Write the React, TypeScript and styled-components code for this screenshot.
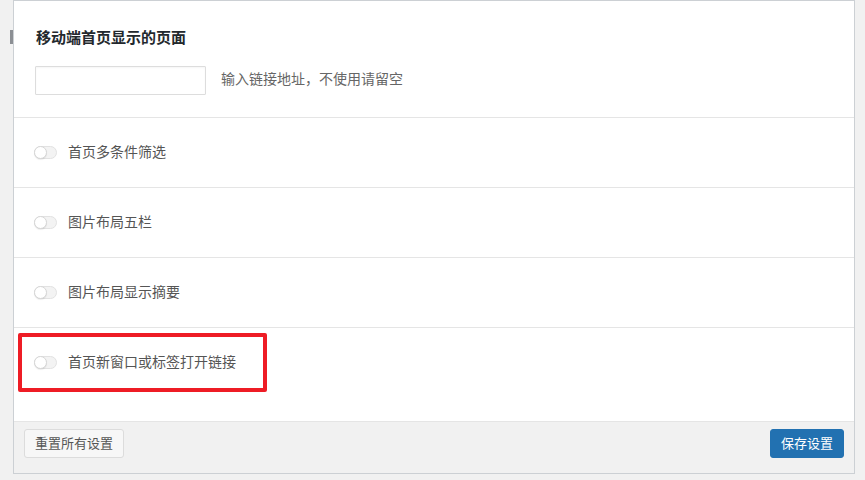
import styled, { createGlobalStyle } from 'styled-components'

const GlobalStyle = createGlobalStyle`
  html, body {
    margin: 0;
    padding: 0;
    background: #f1f1f1;
    font-family: "Noto Sans CJK SC", "Noto Sans", sans-serif;
  }
`

const options = [
  { label: '首页多条件筛选' },
  { label: '图片布局五栏' },
  { label: '图片布局显示摘要' },
  { label: '首页新窗口或标签打开链接', highlighted: true, last: true },
]

export default function App() {
  return <Page>
    <GlobalStyle />
    <Marker />

    <Panel>
      <Section>
        <Title>移动端首页显示的页面</Title>
        <Field>
          <TextInput type="text" />
          <Hint>输入链接地址，不使用请留空</Hint>
        </Field>
      </Section>

      {options.map(option => (
        <Row key={option.label} $last={option.last}>
          <Toggle />
          <Label>{option.label}</Label>
          {option.highlighted && <Highlight />}
        </Row>
      ))}

      <Footer>
        <ResetButton>重置所有设置</ResetButton>
        <SaveButton>保存设置</SaveButton>
      </Footer>
    </Panel>
  </Page>
}

const Page = styled.div`
  display: flex;
  align-items: flex-start;
  padding-left: 10px;
  height: 480px;
  box-sizing: border-box;
  overflow: hidden;
`

const Marker = styled.div`
  width: 3px;
  height: 14px;
  margin-top: 30px;
  background: #8c8f94;
  flex-shrink: 0;
`

const Panel = styled.div`
  width: 842px;
  box-sizing: border-box;
  background: #fff;
  border: 1px solid #ccd0d4;
`

const Section = styled.div`
  padding: 26px 21px 22px;
  border-bottom: 1px solid #e5e5e5;
`

const Title = styled.h2`
  margin: 0 0 0 1px;
  font-size: 15px;
  line-height: 20px;
  font-weight: 600;
  color: #23282d;
`

const Field = styled.div`
  display: flex;
  align-items: center;
  gap: 15px;
  margin-top: 19px;
`

const TextInput = styled.input`
  width: 171px;
  height: 29px;
  box-sizing: border-box;
  border: 1px solid #ddd;
  border-radius: 1px;
  box-shadow: inset 0 1px 2px rgba(0, 0, 0, 0.04);
  background: #fff;
  margin: 0;
  padding: 0 6px;
`

const Hint = styled.span`
  font-size: 14px;
  line-height: 20px;
  padding-bottom: 5px;
  color: #666;
`

const Row = styled.div<{ $last?: boolean }>`
  position: relative;
  display: flex;
  align-items: center;
  gap: 11px;
  height: 69px;
  padding: 0 20px ${p => (p.$last ? '24px' : '0')};
  border-bottom: 1px solid #e5e5e5;
`

const Toggle = styled.span`
  position: relative;
  width: 23px;
  height: 13px;
  box-sizing: border-box;
  border-radius: 7px;
  background: #f3f3f3;
  border: 1px solid #e2e2e2;
  flex-shrink: 0;

  &::after {
    content: '';
    position: absolute;
    left: -1px;
    top: -1px;
    width: 13px;
    height: 13px;
    box-sizing: border-box;
    border-radius: 50%;
    background: #fff;
    border: 1px solid #d6d6d6;
    box-shadow: 0 1px 1px rgba(0, 0, 0, 0.08);
  }
`

const Label = styled.span`
  font-size: 14px;
  line-height: 20px;
  padding-bottom: 3px;
  color: #555;
`

const Highlight = styled.div`
  position: absolute;
  left: 4px;
  top: 5px;
  width: 249px;
  height: 59px;
  box-sizing: border-box;
  border: 4px solid #ee1c25;
  border-radius: 2px;
  pointer-events: none;
`

const Footer = styled.div`
  display: flex;
  justify-content: space-between;
  align-items: flex-start;
  height: 51px;
  box-sizing: border-box;
  padding: 7px 10px 0 10px;
  background: #f1f1f1;
`

const Button = styled.button`
  height: 29px;
  box-sizing: border-box;
  border-radius: 3px;
  padding: 0 0 2px;
  font-family: "Noto Sans CJK SC", "Noto Sans", sans-serif;
  font-size: 13px;
  line-height: 1;
  cursor: pointer;
`

const ResetButton = styled(Button)`
  width: 100px;
  background: #f7f7f7;
  border: 1px solid #dcdcdc;
  color: #555;
`

const SaveButton = styled(Button)`
  width: 74px;
  background: #2271b1;
  border: 1px solid #2271b1;
  color: #fff;
`
